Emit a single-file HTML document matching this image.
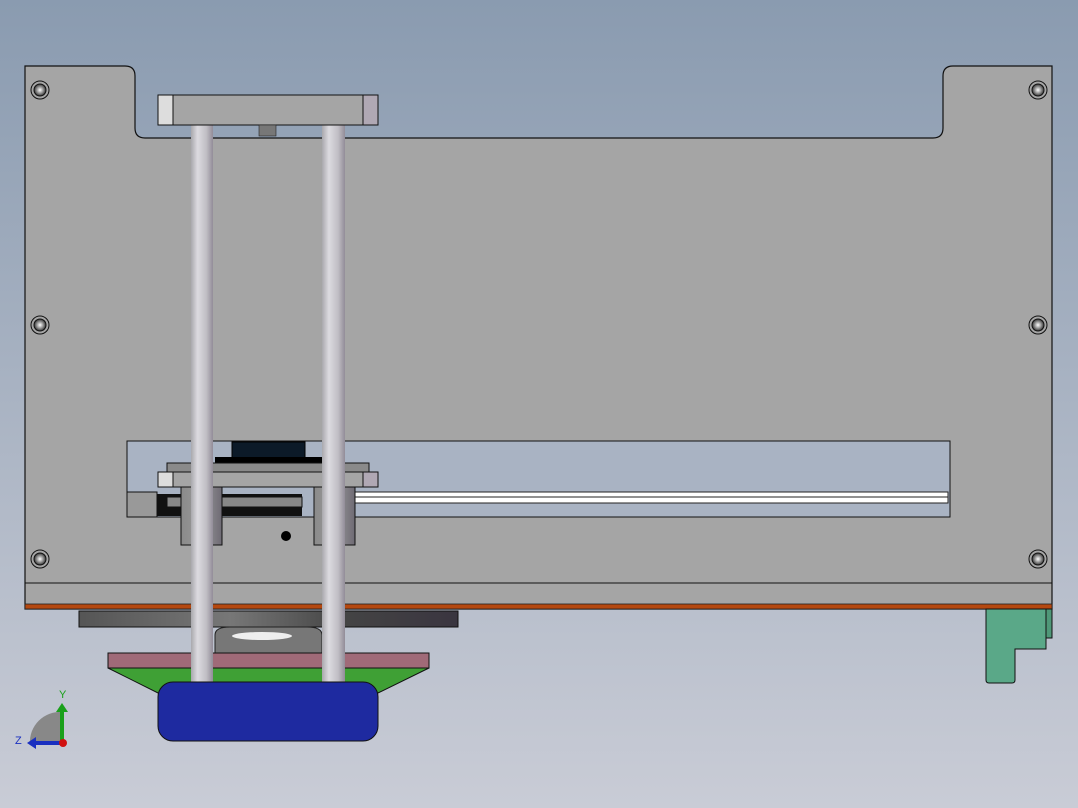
<!DOCTYPE html><html><head><style>body{margin:0}svg{display:block}</style></head><body>
<svg width="1078" height="808" viewBox="0 0 1078 808" xmlns="http://www.w3.org/2000/svg">
<defs>
<linearGradient id="bg" x1="0" y1="0" x2="0" y2="1"><stop offset="0" stop-color="#8a9bb0"/><stop offset="1" stop-color="#c9ccd6"/></linearGradient>
<linearGradient id="rod" x1="0" x2="1"><stop offset="0" stop-color="#a9a8ad"/><stop offset=".3" stop-color="#dcdbe0"/><stop offset=".7" stop-color="#c0bec4"/><stop offset="1" stop-color="#928c98"/></linearGradient>
<linearGradient id="bush" x1="0" x2="1"><stop offset="0" stop-color="#8a8a8a"/><stop offset=".5" stop-color="#9a9a9a"/><stop offset="1" stop-color="#6e6a74"/></linearGradient>
<linearGradient id="disc" x1="0" x2="1"><stop offset="0" stop-color="#555"/><stop offset=".4" stop-color="#777"/><stop offset=".7" stop-color="#444"/><stop offset="1" stop-color="#3a3540"/></linearGradient>
<radialGradient id="scr"><stop offset="0" stop-color="#fff"/><stop offset=".6" stop-color="#888"/><stop offset="1" stop-color="#333"/></radialGradient>
</defs>
<rect width="1078" height="808" fill="url(#bg)"/>
<path d="M25 66H125Q135 66 135 76V128Q135 138 145 138H933Q943 138 943 128V76Q943 66 953 66H1052V609H25Z" fill="#a5a5a5" stroke="#111" stroke-width="1.2"/>
<line x1="25" y1="583" x2="1052" y2="583" stroke="#111"/>
<rect x="25" y="604" width="1027" height="5" fill="#b5480f" stroke="#222" stroke-width=".8"/>
<g stroke="#111" fill="none">
<circle cx="40" cy="90" r="9"/><circle cx="1038" cy="90" r="9"/><circle cx="40" cy="325" r="9"/><circle cx="1038" cy="325" r="9"/><circle cx="40" cy="559" r="9"/><circle cx="1038" cy="559" r="9"/></g>
<g fill="url(#scr)" stroke="#111"><circle cx="40" cy="90" r="6"/><circle cx="1038" cy="90" r="6"/><circle cx="40" cy="325" r="6"/><circle cx="1038" cy="325" r="6"/><circle cx="40" cy="559" r="6"/><circle cx="1038" cy="559" r="6"/></g>
<rect x="127" y="441" width="823" height="76" fill="#a9b3c3" stroke="#111"/>
<rect x="355" y="492" width="593" height="11" fill="#fff" stroke="#222" stroke-width="1"/>
<line x1="355" y1="497" x2="948" y2="497" stroke="#222"/>
<rect x="127" y="492" width="30" height="25" fill="#999" stroke="#111"/>
<rect x="157" y="494" width="145" height="22" fill="#111"/>
<rect x="167" y="497" width="135" height="10" fill="#888" stroke="#111"/>
<rect x="232" y="442" width="73" height="16" fill="#0c1a28" stroke="#000"/>
<rect x="215" y="457" width="107" height="10" fill="#000"/>
<rect x="167" y="463" width="202" height="10" fill="#8a8a8a" stroke="#111"/>
<rect x="158" y="472" width="220" height="15" fill="#a5a5a5" stroke="#111"/>
<rect x="158" y="472" width="15" height="15" fill="#ddd" stroke="#111"/>
<rect x="363" y="472" width="15" height="15" fill="#b0a8b4" stroke="#111"/>
<rect x="181" y="487" width="41" height="58" fill="url(#bush)" stroke="#111"/>
<rect x="314" y="487" width="41" height="58" fill="url(#bush)" stroke="#111"/>
<circle cx="286" cy="536" r="5" fill="#000"/>
<rect x="79" y="611" width="379" height="16" fill="url(#disc)" stroke="#111"/>
<path d="M215 653V635Q215 627 230 627H307Q322 627 322 635V653Z" fill="#777" stroke="#222"/>
<ellipse cx="262" cy="636" rx="30" ry="4" fill="#eee"/>
<rect x="108" y="653" width="321" height="15" fill="#a06a78" stroke="#111"/>
<path d="M108 668H429L378 693H158Z" fill="#3fa035" stroke="#111"/>
<rect x="191" y="125" width="22" height="557" fill="url(#rod)"/>
<rect x="322" y="125" width="23" height="557" fill="url(#rod)"/>
<rect x="158" y="682" width="220" height="59" rx="15" fill="#1e2aa0" stroke="#111"/>
<rect x="158" y="95" width="220" height="30" fill="#a5a5a5" stroke="#111"/>
<rect x="158" y="95" width="15" height="30" fill="#ddd" stroke="#111"/>
<rect x="363" y="95" width="15" height="30" fill="#b0a8b4" stroke="#111"/>
<rect x="259" y="125" width="17" height="11" fill="#777" stroke="#222" stroke-width=".6"/>
<path d="M986 609H1046V649H1015V680Q1015 683 1012 683H989Q986 683 986 680Z" fill="#5aa888" stroke="#111"/>
<rect x="1046" y="609" width="6" height="29" fill="#4f9878" stroke="#111"/>
<path d="M30 744A30 30 0 0 1 62 712V744Z" fill="#888"/>
<rect x="60" y="710" width="4" height="30" fill="#1aa01a"/><path d="M56 712L62 703L68 712Z" fill="#1aa01a"/>
<rect x="34" y="741" width="28" height="4" fill="#1a30c0"/><path d="M36 737L27 743L36 749Z" fill="#1a30c0"/>
<circle cx="63" cy="743" r="4" fill="#d01010"/>
<text x="59" y="698" font-family="Liberation Sans,sans-serif" font-size="11" fill="#1aa01a">Y</text>
<text x="15" y="744" font-family="Liberation Sans,sans-serif" font-size="11" fill="#1a30c0">Z</text>
</svg></body></html>
